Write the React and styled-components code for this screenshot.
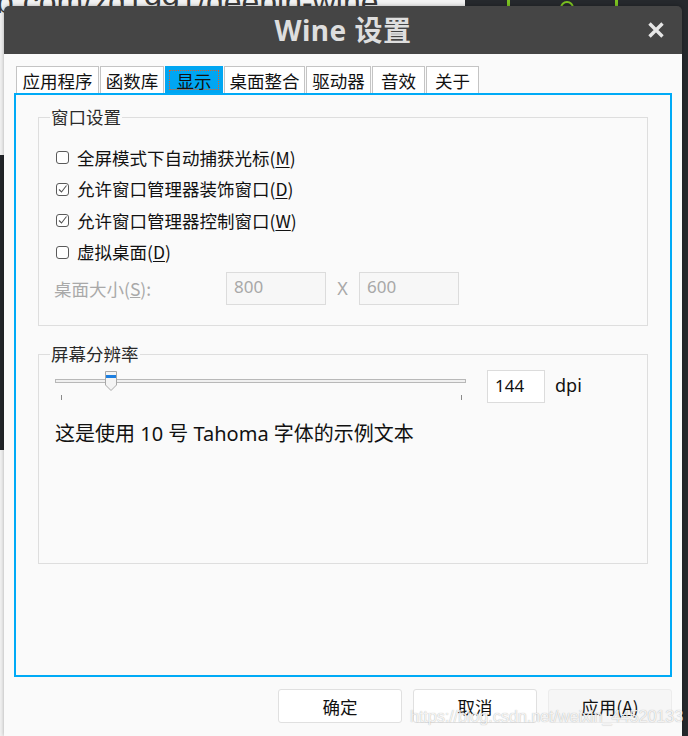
import React from 'react';
import styled, { createGlobalStyle } from 'styled-components';

const GlobalStyle = createGlobalStyle`
  html, body {
    margin: 0;
    padding: 0;
    background: #26292d;
  }
  body {
    font-family: "Noto Sans", "Noto Sans CJK SC", sans-serif;
  }
`;

const TABS = [
  { label: '应用程序', w: 83 },
  { label: '函数库', w: 64 },
  { label: '显示', w: 58, active: true },
  { label: '桌面整合', w: 81 },
  { label: '驱动器', w: 65 },
  { label: '音效', w: 53 },
  { label: '关于', w: 53 },
];

const OPTIONS = [
  { text: '全屏模式下自动捕获光标', key: 'M', checked: false },
  { text: '允许窗口管理器装饰窗口', key: 'D', checked: true },
  { text: '允许窗口管理器控制窗口', key: 'W', checked: true },
  { text: '虚拟桌面', key: 'D', checked: false },
];

function Check({ checked }) {
  return (
    <Box>
      {checked && (
        <svg width="11" height="11" viewBox="0 0 11 11">
          <path d="M2 5.5 L4.5 8 L9.5 1.5" fill="none" stroke="#555" strokeWidth="1.1" />
        </svg>
      )}
    </Box>
  );
}

function App() {
  return (
    <Desktop>
      <GlobalStyle />
      <BrowserBehind>
        <span>b.com/zq1991/deepin-wine</span>
      </BrowserBehind>
      <LeftDark />
      <GreenBar style={{ left: 507 }} />
      <GreenBar style={{ left: 615 }} />
      <GreenRing />
      <Dialog>
        <TitleBar>
          <Title>Wine 设置</Title>
          <Close>
            <svg width="18" height="18" viewBox="0 0 18 18">
              <path d="M2.5 2.5 L15.5 15.5 M15.5 2.5 L2.5 15.5" stroke="#e6e6e6" strokeWidth="3.4" />
            </svg>
          </Close>
        </TitleBar>
        <Body>
          <TabRow>
            {TABS.map((t) => (
              <Tab key={t.label} $w={t.w} $active={t.active}>
                {t.active ? <Focus>{t.label}</Focus> : t.label}
              </Tab>
            ))}
          </TabRow>
          <Panel>
            <Group $h={219}>
              <legend>窗口设置</legend>
              <Options>
                {OPTIONS.map((o, i) => (
                  <OptionRow key={i}>
                    <Check checked={o.checked} />
                    <span>
                      {o.text}(<u>{o.key}</u>)
                    </span>
                  </OptionRow>
                ))}
              </Options>
              <SizeRow>
                <SizeLabel>
                  桌面大小(<u>S</u>):
                </SizeLabel>
                <Field $disabled>800</Field>
                <Times>X</Times>
                <Field $disabled>600</Field>
              </SizeRow>
            </Group>
            <Group $h={220} $top={18}>
              <legend>屏幕分辨率</legend>
              <DpiRow>
                <Slider>
                  <Track />
                  <Thumb>
                    <svg width="12" height="20" viewBox="0 0 12 20">
                      <path d="M0.5 0.5 H11.5 V14 L6 19.5 L0.5 14 Z" fill="#f4f4f4" stroke="#a8a8a8" />
                      <rect x="1" y="4" width="10" height="3" fill="#1d7fe0" />
                    </svg>
                  </Thumb>
                  <Ticks>
                    <i />
                    <i />
                  </Ticks>
                </Slider>
                <Field $w={58}>144</Field>
                <Unit>dpi</Unit>
              </DpiRow>
              <Sample>这是使用 10 号 Tahoma 字体的示例文本</Sample>
            </Group>
          </Panel>
          <Buttons>
            <Button>确定</Button>
            <Button>取消</Button>
            <Button $muted>
              应用(<u>A</u>)
            </Button>
          </Buttons>
        </Body>
      </Dialog>
      <Watermark>https://blog.csdn.net/weixin_44520133</Watermark>
    </Desktop>
  );
}

const Desktop = styled.div`
  position: relative;
  width: 688px;
  height: 736px;
  overflow: hidden;
  padding: 6px 6px 0 4px;
  box-sizing: border-box;
  background: #26292d;
`;

const BrowserBehind = styled.div`
  position: absolute;
  left: 0;
  top: 0;
  width: 465px;
  height: 736px;
  background: #f2f2f2;
  span {
    position: absolute;
    left: -4px;
    top: -16px;
    font-family: "Liberation Sans", sans-serif;
    font-size: 32px;
    color: #3a3a3a;
    white-space: nowrap;
  }
`;

const LeftDark = styled.div`
  position: absolute;
  left: 0;
  top: 155px;
  width: 20px;
  height: 295px;
  background: #23262a;
`;

const GreenBar = styled.div`
  position: absolute;
  top: 0;
  width: 3px;
  height: 8px;
  background: #7cc321;
`;

const GreenRing = styled.div`
  position: absolute;
  left: 560px;
  top: 1px;
  width: 10px;
  height: 10px;
  border: 2px solid #7cc321;
  border-radius: 50%;
`;

const Dialog = styled.div`
  position: relative;
  display: flex;
  flex-direction: column;
  width: 678px;
  height: 730px;
  border-radius: 5px 5px 0 0;
  overflow: hidden;
  box-shadow: 0 0 4px rgba(0, 0, 0, 0.3);
`;

const TitleBar = styled.div`
  position: relative;
  height: 48px;
  background: #454545;
  display: flex;
  align-items: center;
  justify-content: center;
`;

const Title = styled.div`
  font-family: "Noto Sans", "Noto Sans CJK SC", sans-serif;
  font-weight: 700;
  font-size: 28px;
  color: #dedede;
  letter-spacing: 0.5px;
  margin-top: -2px;
`;

const Close = styled.div`
  position: absolute;
  right: 17px;
  top: 15px;
  display: flex;
`;

const Body = styled.div`
  flex: 1;
  background: #fafafa;
  padding: 12px 10px 0 10px;
  display: flex;
  flex-direction: column;
`;

const TabRow = styled.div`
  display: flex;
  gap: 1px;
  padding-left: 2px;
  height: 27px;
`;

const Tab = styled.div`
  box-sizing: border-box;
  width: ${(p) => p.$w}px;
  height: 27px;
  display: flex;
  align-items: center;
  justify-content: center;
  font-family: "Noto Sans CJK SC", sans-serif;
  font-size: 17.5px;
  color: #111;
  background: ${(p) => (p.$active ? '#00a6f2' : '#fff')};
  border: 1px solid ${(p) => (p.$active ? '#00a6f2' : '#c4c4c4')};
  border-bottom: none;
  padding: ${(p) => (p.$active ? '3px' : '0')};
`;

const Focus = styled.div`
  flex: 1;
  align-self: stretch;
  display: flex;
  align-items: center;
  justify-content: center;
  border: 1px dotted #e0602a;
`;

const Panel = styled.div`
  box-sizing: border-box;
  height: 584px;
  border: 2px solid #00aaf6;
  background: #fafafa;
  padding: 12px 22px 0 22px;
`;

const Group = styled.fieldset`
  box-sizing: border-box;
  margin: ${(p) => p.$top || 0}px 0 0 0;
  height: ${(p) => p.$h}px;
  border: 1px solid #dedede;
  padding: 0 0 0 17px;
  min-width: 0;

  legend {
    margin-left: -6px;
    padding: 0 1px;
    font-family: "Noto Sans CJK SC", sans-serif;
    font-size: 17.5px;
    color: #2a2a2a;
    line-height: 20px;
  }
`;

const Options = styled.div`
  display: flex;
  flex-direction: column;
  padding-top: 19px;
  gap: 9.6px;
`;

const OptionRow = styled.div`
  display: flex;
  align-items: center;
  gap: 8px;
  height: 22px;
  font-family: "Noto Sans CJK SC", sans-serif;
  font-size: 17.5px;
  color: #111;

  u {
    text-underline-offset: 2px;
  }
`;

const Box = styled.div`
  box-sizing: border-box;
  width: 13px;
  height: 13px;
  border: 1px solid #5a5a5a;
  border-radius: 3px;
  display: flex;
  align-items: center;
  justify-content: center;
  background: #fff;
  margin-top: 1px;
`;

const SizeRow = styled.div`
  display: flex;
  align-items: center;
  margin-top: 9px;
`;

const SizeLabel = styled.div`
  width: 172px;
  font-family: "Noto Sans CJK SC", sans-serif;
  font-size: 17.5px;
  color: #a9a9a9;
  margin-left: -2px;
`;

const Field = styled.div`
  box-sizing: border-box;
  width: ${(p) => p.$w || 100}px;
  height: 33px;
  border: 1px solid #dcdcdc;
  background: ${(p) => (p.$disabled ? '#f7f7f7' : '#fff')};
  color: ${(p) => (p.$disabled ? '#a8a8a8' : '#111')};
  font-family: "Noto Sans", sans-serif;
  font-size: 17px;
  display: flex;
  align-items: center;
  padding: 0 0 3px 7px;
`;

const Times = styled.div`
  width: 33px;
  text-align: center;
  font-family: "Noto Sans", sans-serif;
  font-size: 18px;
  color: #a9a9a9;
`;

const DpiRow = styled.div`
  display: flex;
  align-items: flex-start;
  padding-top: 8px;
  margin-left: -1px;

  & > ${Field} {
    margin-top: -2px;
  }
`;

const Slider = styled.div`
  position: relative;
  width: 411px;
  height: 36px;
  margin-right: 21px;
`;

const Track = styled.div`
  position: absolute;
  left: 0;
  right: 0;
  top: 7px;
  height: 4px;
  box-sizing: border-box;
  border: 1px solid #b8b8b8;
  background: #f0f0f0;
`;

const Thumb = styled.div`
  position: absolute;
  left: 50px;
  top: -1px;
  display: flex;
`;

const Ticks = styled.div`
  position: absolute;
  left: 6px;
  right: 4px;
  top: 23px;
  display: flex;
  justify-content: space-between;

  i {
    width: 1px;
    height: 5px;
    background: #8a8a8a;
  }
`;

const Unit = styled.div`
  margin-left: 10px;
  margin-top: 1px;
  font-family: "Noto Sans", sans-serif;
  font-size: 18px;
  color: #111;
`;

const Sample = styled.div`
  margin-top: 10px;
  margin-left: -1px;
  font-family: "Noto Sans", "Noto Sans CJK SC", sans-serif;
  font-size: 20px;
  color: #111;
`;

const Buttons = styled.div`
  display: flex;
  justify-content: flex-end;
  gap: 11px;
  padding-top: 12px;
`;

const Button = styled.div`
  box-sizing: border-box;
  width: 124px;
  height: 34px;
  border: 1px solid ${(p) => (p.$muted ? '#ececec' : '#e0e0e0')};
  border-radius: 3px;
  background: ${(p) => (p.$muted ? '#f6f6f6' : '#fff')};
  display: flex;
  align-items: center;
  justify-content: center;
  font-family: "Noto Sans CJK SC", sans-serif;
  font-size: 17.5px;
  color: #111;
`;

const Watermark = styled.div`
  position: absolute;
  left: 410px;
  top: 707px;
  font-family: "Liberation Sans", sans-serif;
  font-size: 16.5px;
  letter-spacing: -0.2px;
  color: rgba(255, 255, 255, 0.85);
  text-shadow: 0 0 1px rgba(0, 0, 0, 0.35);
  white-space: nowrap;
`;

export default App;
